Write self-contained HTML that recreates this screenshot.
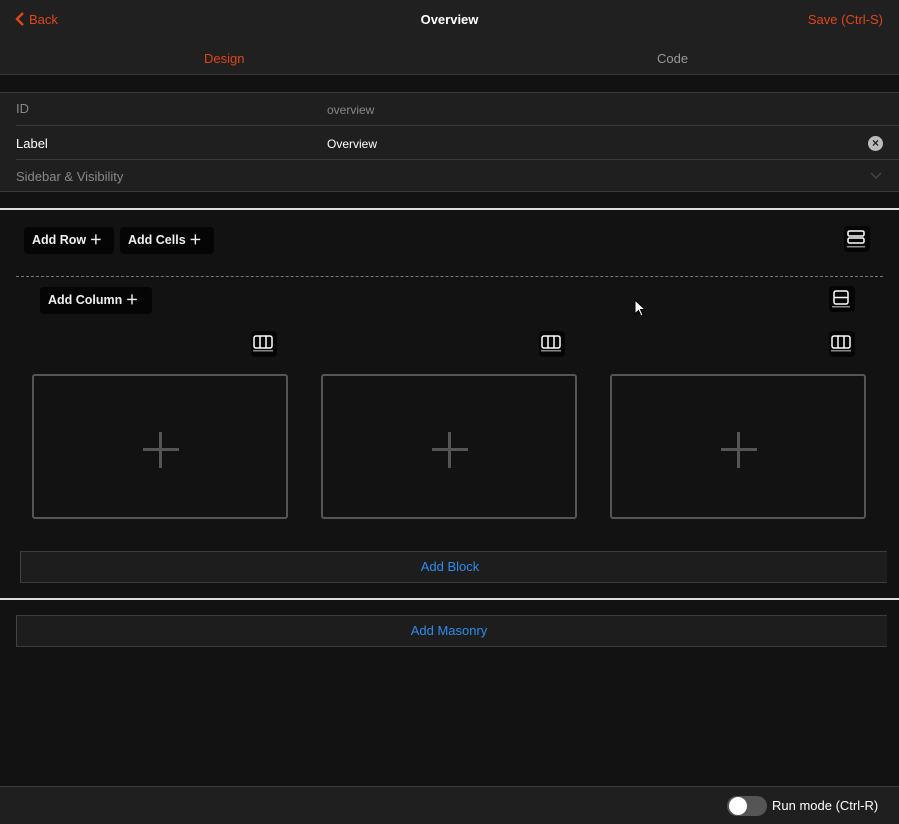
<!DOCTYPE html>
<html><head><style>
*{margin:0;padding:0;box-sizing:border-box}
body{width:899px;height:824px;background:#121212;font-family:"Liberation Sans",sans-serif;position:relative;overflow:hidden;color:#fff}
.a{position:absolute}
.btn{position:absolute;background:#050505;border-radius:4px;font-size:12.5px;font-weight:bold;color:#f0f0f0;height:27px;line-height:27px;padding-left:8px}
.ico{position:absolute;background:#050505;border-radius:4px;width:26px;height:26px}
.box{position:absolute;top:374px;width:256px;height:145px;border:2px solid #555;border-radius:3px}
.box:before{content:"";position:absolute;left:109px;top:72px;width:36px;height:3px;background:#555}
.box:after{content:"";position:absolute;left:125px;top:56px;width:3px;height:36px;background:#555}
.bar{position:absolute;background:#1d1d1d;border-top:1px solid #3c3c3c;border-bottom:1px solid #3c3c3c;border-left:1px solid #444;color:#2f8cf0;font-size:13px;text-align:center}
</style></head><body>
<div class="a" style="left:0;top:0;width:899px;height:75px;background:#202020;border-bottom:1px solid #3a3a3a"></div>
<svg class="a" style="left:15px;top:12px" width="10" height="14"><path d="M8 1 L2 7 L8 13" stroke="#e0461c" stroke-width="2.4" fill="none"/></svg>
<div class="a" style="left:29px;top:12px;font-size:13px;color:#e0461c">Back</div>
<div class="a" style="left:0;width:899px;top:12px;font-size:13px;font-weight:bold;text-align:center">Overview</div>
<div class="a" style="right:16px;top:12px;font-size:13px;color:#e0461c">Save (Ctrl-S)</div>
<div class="a" style="left:204px;top:51px;font-size:13px;color:#e0461c">Design</div>
<div class="a" style="left:657px;top:51px;font-size:13px;color:#999">Code</div>
<div class="a" style="left:0;top:92px;width:899px;height:100px;background:#1f1f1f;border-top:1px solid #3a3a3a;border-bottom:1px solid #3a3a3a"></div>
<div class="a" style="left:16px;top:125px;width:883px;height:1px;background:#3a3a3a"></div>
<div class="a" style="left:16px;top:159px;width:883px;height:1px;background:#3a3a3a"></div>
<div class="a" style="left:16px;top:101px;font-size:13px;color:#888">ID</div>
<div class="a" style="left:327px;top:103px;font-size:12px;color:#888">overview</div>
<div class="a" style="left:16px;top:136px;font-size:13px;color:#fff">Label</div>
<div class="a" style="left:327px;top:137px;font-size:12px;color:#fff">Overview</div>
<div class="a" style="left:868px;top:136px;width:15px;height:15px;border-radius:50%;background:#bbb;color:#1f1f1f;font-size:12px;line-height:15px;text-align:center;font-weight:bold">×</div>
<div class="a" style="left:16px;top:169px;font-size:13px;color:#888">Sidebar &amp; Visibility</div>
<svg class="a" style="left:870px;top:172px" width="12" height="8"><path d="M1 1 L6 6 L11 1" stroke="#444" stroke-width="1.5" fill="none"/></svg>
<div class="a" style="left:0;top:208px;width:899px;height:2px;background:#ddd"></div>
<div class="btn" style="left:24px;top:227px;width:90px">Add Row ＋</div>
<div class="btn" style="left:120px;top:227px;width:94px">Add Cells ＋</div>
<div class="ico" style="left:844px;top:226px"><svg width="26" height="26"><rect x="4" y="5" width="16" height="5" rx="1.5" stroke="#fff" stroke-width="1.5" fill="none"/><rect x="4" y="12" width="16" height="5" rx="1.5" stroke="#fff" stroke-width="1.5" fill="none"/><rect x="3" y="20" width="18" height="1.5" fill="#888"/></svg></div>
<div class="a" style="left:16px;top:276px;width:867px;border-top:1px dashed #777"></div>
<div class="btn" style="left:40px;top:287px;width:112px">Add Column ＋</div>
<div class="ico" style="left:829px;top:286px"><svg width="26" height="26"><rect x="5" y="5" width="14" height="13" rx="2" stroke="#fff" stroke-width="1.5" fill="none"/><line x1="5" y1="11.5" x2="19" y2="11.5" stroke="#fff" stroke-width="1.5"/><rect x="3" y="20" width="18" height="1.5" fill="#888"/></svg></div>
<div class="ico" style="left:251px;top:331px"><svg width="26" height="26"><rect x="3" y="5" width="18" height="12" rx="2" stroke="#fff" stroke-width="1.5" fill="none"/><line x1="9" y1="5" x2="9" y2="17" stroke="#fff" stroke-width="1.5"/><line x1="15" y1="5" x2="15" y2="17" stroke="#fff" stroke-width="1.5"/><rect x="2" y="19" width="20" height="1.5" fill="#888"/></svg></div>
<div class="ico" style="left:539px;top:331px"><svg width="26" height="26"><rect x="3" y="5" width="18" height="12" rx="2" stroke="#fff" stroke-width="1.5" fill="none"/><line x1="9" y1="5" x2="9" y2="17" stroke="#fff" stroke-width="1.5"/><line x1="15" y1="5" x2="15" y2="17" stroke="#fff" stroke-width="1.5"/><rect x="2" y="19" width="20" height="1.5" fill="#888"/></svg></div>
<div class="ico" style="left:829px;top:331px"><svg width="26" height="26"><rect x="3" y="5" width="18" height="12" rx="2" stroke="#fff" stroke-width="1.5" fill="none"/><line x1="9" y1="5" x2="9" y2="17" stroke="#fff" stroke-width="1.5"/><line x1="15" y1="5" x2="15" y2="17" stroke="#fff" stroke-width="1.5"/><rect x="2" y="19" width="20" height="1.5" fill="#888"/></svg></div>
<svg class="a" style="left:634px;top:299px" width="12" height="18"><path d="M1 1 L1 15 L4.5 11.5 L7 17 L9 16 L6.5 10.5 L11 10.5 Z" fill="#fff" stroke="#000" stroke-width="1"/></svg>
<div class="box" style="left:32px"></div>
<div class="box" style="left:321px"></div>
<div class="box" style="left:610px"></div>
<div class="bar" style="left:20px;top:551px;width:867px;height:32px;line-height:30px;padding-right:8px">Add Block</div>
<div class="a" style="left:0;top:598px;width:899px;height:2px;background:#ddd"></div>
<div class="bar" style="left:16px;top:615px;width:871px;height:32px;line-height:30px;padding-right:6px">Add Masonry</div>
<div class="a" style="left:0;top:786px;width:899px;height:38px;background:#1f1f1f;border-top:1px solid #3a3a3a"></div>
<div class="a" style="left:727px;top:796px;width:40px;height:20px;border-radius:10px;background:#555"></div>
<div class="a" style="left:729px;top:797px;width:18px;height:18px;border-radius:50%;background:#fff"></div>
<div class="a" style="left:772px;top:798px;font-size:13px;color:#fff">Run mode (Ctrl-R)</div>
</body></html>
